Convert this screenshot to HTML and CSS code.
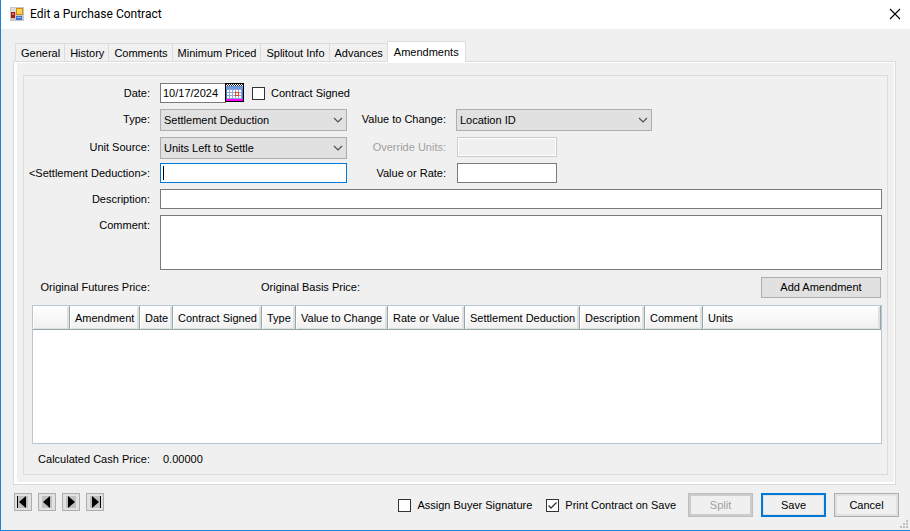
FILE: index.html
```html
<!DOCTYPE html>
<html lang="en">
<head>
    <meta charset="UTF-8">
    <meta name="viewport" content="width=device-width, initial-scale=1.0">
    <title>Edit a Purchase Contract</title>
    <link rel="stylesheet" href="styles.css">
</head>
<body>
    <header class="title-bar">
        <svg class="app-icon" width="14" height="14" viewBox="0 0 14 14" shape-rendering="crispEdges">
            <rect width="14" height="14" fill="#c8c8cc"/>
            <rect x="1" y="1" width="5" height="4" fill="#dcdce0"/>
            <rect x="6" y="1" width="7" height="7" fill="#c98f10"/>
            <rect x="7" y="2" width="5" height="5" fill="#ffd34a"/>
            <rect x="1" y="5" width="4" height="6" fill="#a81c10"/>
            <rect x="2" y="6" width="2" height="2" fill="#e8705c"/>
            <rect x="6" y="9" width="6" height="4" fill="#3f74cc"/>
            <rect x="7" y="10" width="4" height="1" fill="#9cc0f4"/>
        </svg>
        <h1>Edit a Purchase Contract</h1>
        <button type="button" class="close-button" aria-label="Close">
            <svg width="12" height="12" viewBox="0 0 12 12"><path d="M1 1L11 11M11 1L1 11" stroke="#000" stroke-width="1.1"/></svg>
        </button>
    </header>

    <form class="content">
        <nav class="tabs">
            <button type="button" class="tab">General</button>
            <button type="button" class="tab">History</button>
            <button type="button" class="tab">Comments</button>
            <button type="button" class="tab">Minimum Priced</button>
            <button type="button" class="tab">Splitout Info</button>
            <button type="button" class="tab">Advances</button>
            <button type="button" class="tab active">Amendments</button>
        </nav>

        <main class="panel">
            <div class="group">
                <div class="fields">
                    <label for="date">Date:</label>
                    <div class="date-row">
                        <input type="text" id="date" class="date-input" value="10/17/2024">
                        <button type="button" class="calendar-button" aria-label="Pick date">
                            <svg width="17" height="17" viewBox="0 0 17 17" shape-rendering="crispEdges">
                                <rect width="17" height="17" fill="#5078c4"/>
                                <rect width="17" height="2" fill="#fff"/>
                                <path d="M0 0h1v1H0zM2 0h1v1H2zM4 0h1v1H4zM6 0h1v1H6zM8 0h1v1H8zM10 0h1v1h-1zM12 0h1v1h-1zM14 0h1v1h-1zM16 0h1v1h-1z" fill="#222"/>
                                <path d="M1 1h1v1H1zM3 1h1v1H3zM5 1h1v1H5zM7 1h1v1H7zM9 1h1v1H9zM11 1h1v1h-1zM13 1h1v1h-1zM15 1h1v1h-1z" fill="#222"/>
                                <rect y="2" width="17" height="3" fill="#6f96dc"/>
                                <rect x="1" y="5" width="15" height="10" fill="#8ca8dc"/>
                                <path d="M1 6h2v2H1zM4 6h2v2H4zM7 6h2v2H7zM10 6h2v2h-2zM13 6h2v2h-2zM1 9h2v2H1zM4 9h2v2H4zM7 9h2v2H7zM13 9h2v2h-2zM1 12h2v2H1zM4 12h2v2H4zM7 12h2v2H7zM10 12h2v2h-2zM13 12h2v2h-2z" fill="#fff"/>
                                <rect x="9" y="8" width="4" height="4" fill="#f04010"/>
                                <rect x="10" y="9" width="2" height="2" fill="#fff"/>
                                <rect y="15" width="17" height="2" fill="#f0f"/>
                            </svg>
                        </button>
                        <label class="check"><input type="checkbox">Contract Signed</label>
                    </div>

                    <label for="type">Type:</label>
                    <select id="type"><option>Settlement Deduction</option></select>
                    <label for="value-to-change">Value to Change:</label>
                    <select id="value-to-change"><option>Location ID</option></select>

                    <label for="unit-source">Unit Source:</label>
                    <select id="unit-source"><option>Units Left to Settle</option></select>
                    <label for="override-units" class="disabled">Override Units:</label>
                    <input type="text" id="override-units" class="short" disabled>

                    <label for="settlement">&lt;Settlement Deduction&gt;:</label>
                    <input type="text" id="settlement" class="current">
                    <label for="rate">Value or Rate:</label>
                    <input type="text" id="rate" class="short">

                    <label for="description">Description:</label>
                    <input type="text" id="description" class="wide">

                    <label for="comment">Comment:</label>
                    <textarea id="comment" class="wide"></textarea>
                </div>

                <div class="prices">
                    <span class="price-label">Original Futures Price:</span>
                    <span class="basis-label">Original Basis Price:</span>
                    <button type="button" class="add-button">Add Amendment</button>
                </div>

                <div class="grid">
                    <table>
                        <colgroup>
                            <col class="col-marker">
                            <col class="col-amendment">
                            <col class="col-date">
                            <col class="col-signed">
                            <col class="col-type">
                            <col class="col-change">
                            <col class="col-rate">
                            <col class="col-settlement">
                            <col class="col-description">
                            <col class="col-comment">
                            <col>
                        </colgroup>
                        <thead>
                            <tr>
                                <th></th>
                                <th>Amendment</th>
                                <th>Date</th>
                                <th>Contract Signed</th>
                                <th>Type</th>
                                <th>Value to Change</th>
                                <th>Rate or Value</th>
                                <th>Settlement Deduction</th>
                                <th>Description</th>
                                <th>Comment</th>
                                <th>Units</th>
                            </tr>
                        </thead>
                    </table>
                </div>

                <div class="cash">
                    <span class="price-label">Calculated Cash Price:</span>
                    <output>0.00000</output>
                </div>
            </div>
        </main>

        <footer class="footer">
            <div class="record-nav">
                <button type="button" aria-label="First"><svg width="12" height="12" viewBox="0 0 12 12"><path d="M0 0H1V12H0ZM9 0V12L2 6Z"/></svg></button>
                <button type="button" aria-label="Previous"><svg width="12" height="12" viewBox="0 0 12 12"><path d="M9 0V12L2 6Z"/></svg></button>
                <button type="button" aria-label="Next"><svg width="12" height="12" viewBox="0 0 12 12"><path d="M3 0V12L10 6Z"/></svg></button>
                <button type="button" aria-label="Last"><svg width="12" height="12" viewBox="0 0 12 12"><path d="M3 0V12L10 6ZM11 0H12V12H11Z"/></svg></button>
            </div>
            <div class="options">
                <label class="check"><input type="checkbox">Assign Buyer Signature</label>
                <label class="check"><input type="checkbox" checked>Print Contract on Save</label>
            </div>
            <div class="actions">
                <button type="button" class="action" disabled>Split</button>
                <button type="submit" class="action primary">Save</button>
                <button type="button" class="action">Cancel</button>
            </div>
        </footer>
    </form>

    <svg class="grip" width="8" height="8" viewBox="0 0 8 8" fill="#bfbfbf" shape-rendering="crispEdges">
        <path d="M6 0h2v2h-2zM3 3h2v2h-2zM6 3h2v2h-2zM0 6h2v2h-2zM3 6h2v2h-2zM6 6h2v2h-2z"/>
    </svg>
</body>
</html>
```
FILE: styles.css
```css
* {
    box-sizing: border-box;
}
body {
    display: flex;
    flex-direction: column;
    min-height: 100vh;
    margin: 0;
    border-left: 1px solid #1883d7;
    border-bottom: 1px solid #1883d7;
    background: #f0f0f0;
    color: #000;
    font: 11px/20px "Liberation Sans", Arial, sans-serif;
}
button, input, select, textarea {
    margin: 0;
    font: inherit;
    color: inherit;
    border-radius: 0;
}
svg {
    display: block;
}

.title-bar {
    display: flex;
    align-items: center;
    height: 29px;
    padding: 0 8px 2px 9px;
    background: #fff;
}
.title-bar h1 {
    flex: 1;
    margin: 0 0 0 6px;
    font: 12px/20px Roboto, sans-serif;
}
.close-button {
    padding: 1px;
    border: none;
    background: none;
}

.content {
    flex: 1;
    display: flex;
    flex-direction: column;
    padding: 12px 11px 13px 12px;
}
.tabs {
    display: flex;
    align-items: flex-end;
    padding-left: 2px;
}
.tab {
    height: 18px;
    padding: 0 4px 0 5px;
    border: 1px solid #dcdcdc;
    border-width: 1px 0 0 1px;
    background: #f0f0f0;
    line-height: 18px;
}
.tab.active {
    height: 21px;
    margin-bottom: -1px;
    padding: 0 6px;
    border-right-width: 1px;
    background: #fff;
    z-index: 1;
}
.panel {
    flex: 1;
    display: flex;
    margin-right: 3px;
    padding: 13px 7px 9px 9px;
    border: 1px solid #dcdcdc;
    box-shadow: inset 3px 0 #fff, inset -1px 0 #fff, inset 0 1px #fff, inset 0 -2px #fff;
}
.group {
    flex: 1;
    display: flex;
    flex-direction: column;
    padding: 7px 5px 4px 8px;
    border: 1px solid #dcdcdc;
}

.fields {
    display: grid;
    grid-template-columns: 118px 187px 89px 1fr;
    grid-template-rows: 20px 22px repeat(3, 20px) 55px;
    column-gap: 10px;
    row-gap: 6px;
    align-items: start;
}
.fields > label {
    justify-self: end;
    white-space: nowrap;
}
.fields .disabled {
    color: #a0a0a0;
}
input[type="text"], textarea {
    width: 100%;
    height: 20px;
    padding: 0 2px;
    border: 1px solid #7a7a7a;
    background: #fff;
}
textarea {
    display: block;
    height: 55px;
    resize: none;
}
input[type="text"]:disabled {
    border-color: #ccc;
    background: #f0f0f0;
    box-shadow: inset 0 0 0 1px #fff;
}
.fields .current {
    border-color: #0078d7;
    background: linear-gradient(#000, #000) 2px 2px / 1px 14px no-repeat #fff;
}
.fields .short {
    width: 100px;
    margin-left: 1px;
}
.fields .wide {
    grid-column: 2 / -1;
}
select {
    width: 100%;
    height: 22px;
    padding: 0 3px;
    border: 1px solid #adadad;
    appearance: none;
    background: #e1e1e1 url("data:image/svg+xml,%3Csvg xmlns='http://www.w3.org/2000/svg' width='10' height='6'%3E%3Cpath d='M1 1L5 5L9 1' fill='none' stroke='%23505050' stroke-width='1.2'/%3E%3C/svg%3E") right 3px center no-repeat;
}
#value-to-change {
    width: 196px;
}
.date-row {
    grid-column: 2 / -1;
    display: flex;
}
.date-row .date-input {
    width: 66px;
    border-right: none;
}
.calendar-button {
    height: 19px;
    padding: 0;
    border: 1px solid #000;
    margin-left: -1px;
}
.check {
    display: flex;
    align-items: center;
    gap: 6px;
}
.date-row .check {
    margin-left: 8px;
}
input[type="checkbox"] {
    width: 13px;
    height: 13px;
    border: 1px solid #333;
    appearance: none;
    background: #fff;
}
input[type="checkbox"]:checked {
    background: #fff url("data:image/svg+xml,%3Csvg xmlns='http://www.w3.org/2000/svg' width='11' height='11'%3E%3Cpath d='M1.5 5.5L4 8L9.5 2.5' fill='none' stroke='%23333' stroke-width='1.3'/%3E%3C/svg%3E") center no-repeat;
}

.prices {
    display: flex;
    margin: 7px 1px 7px 0;
    line-height: 21px;
}
.price-label {
    width: 118px;
    text-align: right;
}
.basis-label {
    margin-left: 111px;
}
.add-button {
    width: 120px;
    height: 21px;
    margin-left: auto;
    padding: 0;
    border: 1px solid #adadad;
    background: #e1e1e1;
    line-height: 19px;
}

.grid {
    flex: 1;
    border: 1px solid #b8c6d4;
    background: #fff;
}
table {
    width: 100%;
    table-layout: fixed;
    border-collapse: separate;
    border-spacing: 0;
}
th {
    height: 24px;
    padding: 0 0 0 5px;
    overflow: hidden;
    border-right: 1px solid #8fa9a9;
    border-bottom: 1px solid #8fa9a9;
    background: linear-gradient(#fff, #f0f0f0);
    box-shadow: inset 1px 1px #fff, inset -2px -1px #e0e0e0;
    font-weight: normal;
    text-align: left;
    white-space: nowrap;
}
.col-marker { width: 37px; }
.col-amendment { width: 70px; }
.col-date { width: 33px; }
.col-signed { width: 89px; }
.col-type { width: 34px; }
.col-change { width: 92px; }
.col-rate { width: 77px; }
.col-settlement { width: 115px; }
.col-description { width: 65px; }
.col-comment { width: 58px; }

.cash {
    display: flex;
    gap: 13px;
    padding: 5px 0 1px;
}

.footer {
    display: flex;
    align-items: flex-start;
    padding: 8px 0 0 1px;
}
.record-nav {
    display: flex;
    gap: 6px;
}
.record-nav button {
    width: 18px;
    height: 18px;
    padding: 2px;
    border: 1px solid #adadad;
    background: #e1e1e1;
}
.record-nav svg {
    background: linear-gradient(#c0c0c0, #c0c0c0) 1px 0 / 10px 12px no-repeat;
}
.options {
    display: flex;
    gap: 14px;
    margin-left: auto;
    line-height: 24px;
}
.actions {
    display: flex;
    gap: 8px;
    margin-left: 12px;
}
.action {
    width: 65px;
    height: 24px;
    padding: 0;
    border: 1px solid #adadad;
    background: #f0f0f0;
    box-shadow: inset 0 0 0 2px #e1e1e1;
}
.action:disabled {
    border-color: #bfbfbf;
    box-shadow: inset 0 0 0 2px #ccc;
    color: #a0a0a0;
}
.action.primary {
    border: 2px solid #0078d7;
    box-shadow: inset 0 0 0 1px #e1e1e1;
}

.grip {
    position: absolute;
    right: 2px;
    bottom: 3px;
}
```
